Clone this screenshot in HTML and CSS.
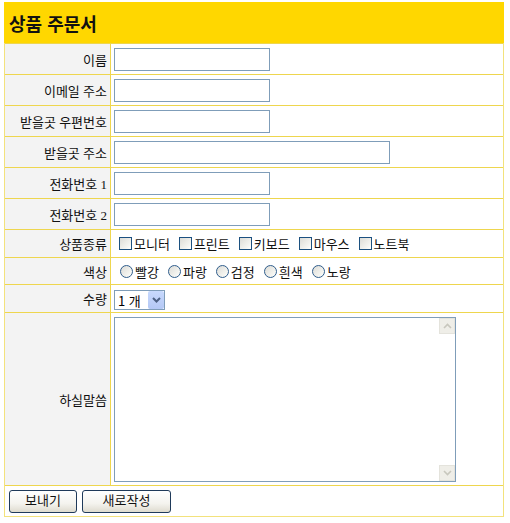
FILE: index.html
```html
<!DOCTYPE html>
<html lang="ko">
<head>
<meta charset="utf-8">
<title>상품 주문서</title>
<link rel="stylesheet" href="styles.css">
</head>
<body>
<form class="order">
  <div class="title">상품 주문서</div>
  <div class="grid">
    <div class="label row-text">이름</div>
    <div class="field row-text"><input class="text" type="text"></div>

    <div class="label row-text">이메일 주소</div>
    <div class="field row-text"><input class="text" type="text"></div>

    <div class="label row-text">받을곳 우편번호</div>
    <div class="field row-text"><input class="text" type="text"></div>

    <div class="label row-text">받을곳 주소</div>
    <div class="field row-text"><input class="text wide" type="text"></div>

    <div class="label row-text">전화번호 1</div>
    <div class="field row-text"><input class="text" type="text"></div>

    <div class="label row-text">전화번호 2</div>
    <div class="field row-text"><input class="text" type="text"></div>

    <div class="label row-check">상품종류</div>
    <div class="field row-check choices">
      <label class="choice"><input class="box" type="checkbox">모니터</label>
      <label class="choice"><input class="box" type="checkbox">프린트</label>
      <label class="choice"><input class="box" type="checkbox">키보드</label>
      <label class="choice"><input class="box" type="checkbox">마우스</label>
      <label class="choice"><input class="box" type="checkbox">노트북</label>
    </div>

    <div class="label row-radio">색상</div>
    <div class="field row-radio choices">
      <label class="choice"><input class="dot" type="radio" name="c">빨강</label>
      <label class="choice"><input class="dot" type="radio" name="c">파랑</label>
      <label class="choice"><input class="dot" type="radio" name="c">검정</label>
      <label class="choice"><input class="dot" type="radio" name="c">흰색</label>
      <label class="choice"><input class="dot" type="radio" name="c">노랑</label>
    </div>

    <div class="label row-select">수량</div>
    <div class="field row-select">
      <span class="select-wrap">
        <select class="select"><option>1 개</option><option>2 개</option></select>
        <span class="select-btn"><svg width="9" height="6" viewBox="0 0 9 6"><path d="M1 1 L4.5 4.5 L8 1" fill="none" stroke="#4d6185" stroke-width="2"/></svg></span>
      </span>
    </div>

    <div class="label row-area">하실말씀</div>
    <div class="field row-area">
      <span class="area-wrap">
        <textarea class="area"></textarea>
        <span class="sb-btn sb-up"><svg width="9" height="6" viewBox="0 0 9 6"><path d="M1 5 L4.5 1.5 L8 5" fill="none" stroke="#c8c7bd" stroke-width="1.6"/></svg></span>
        <span class="sb-btn sb-down"><svg width="9" height="6" viewBox="0 0 9 6"><path d="M1 1 L4.5 4.5 L8 1" fill="none" stroke="#c8c7bd" stroke-width="1.6"/></svg></span>
      </span>
    </div>

    <div class="buttons">
      <button class="btn btn-send" type="button">보내기</button>
      <button class="btn btn-reset" type="button">새로작성</button>
    </div>
  </div>
</form>
</body>
</html>
```
FILE: styles.css
```css
html, body {
  margin: 0;
  padding: 0;
  background: #ffffff;
}
body {
  padding: 2px 0 0 4px;
  font-family: "Liberation Serif", "Noto Sans CJK KR", serif;
  font-size: 13px;
  color: #000;
}
.order {
  width: 500px;
  box-sizing: border-box;
  border: 1px solid #f3e27c;
  border-top: 0;
  margin: 0;
}
.title {
  background: #ffd700;
  height: 41px;
  margin: 0 -1px;
  padding-left: 5px;
  display: flex;
  align-items: center;
  font-family: "Noto Sans CJK KR", sans-serif;
  font-weight: bold;
  font-size: 18px;
  color: #111;
}
.grid {
  display: grid;
  grid-template-columns: 106px 1fr;
}
.label, .field {
  border-top: 1px solid #eed64e;
  display: flex;
  align-items: center;
}
.label {
  background: #f3f3f3;
  border-right: 1px solid #eed64e;
  justify-content: flex-end;
  padding-right: 3px;
  white-space: nowrap;
  color: #111;
}
.field {
  padding-left: 3px;
}
.row-text { height: 30px; }
.row-check { height: 27px; }
.row-radio { height: 26px; }
.row-select { height: 27px; }
.row-area { height: 172px; }

.text {
  box-sizing: border-box;
  width: 156px;
  height: 23px;
  border: 1px solid #7f9db9;
  margin: 0;
  padding: 0 3px;
  background: #fff;
}
.text.wide { width: 276px; }

.choices {
  font-family: "Noto Sans CJK KR", sans-serif;
  font-size: 13px;
}
.row-check.choices { padding-left: 8px; gap: 9px; }
.row-radio.choices { padding-left: 9px; gap: 9px; }
.choice {
  display: inline-flex;
  align-items: center;
  gap: 2px;
  color: #111;
}
.box, .dot {
  appearance: none;
  -webkit-appearance: none;
  margin: 0;
  width: 13px;
  height: 13px;
  border: 1px solid #1c5180;
  background: linear-gradient(135deg, #dcdcd7 0%, #f4f4f0 70%, #ffffff 100%);
  box-sizing: border-box;
}
.dot {
  border-radius: 50%;
  border-color: #2f5d8c;
}

.select-wrap {
  position: relative;
  display: inline-block;
  margin-top: 2px;
}
.select {
  appearance: none;
  -webkit-appearance: none;
  width: 51px;
  height: 20px;
  border: 1px solid #7f9db9;
  background: #fff;
  font-family: "Noto Sans CJK KR", sans-serif;
  font-size: 13px;
  padding: 0 0 0 3px;
  margin: 0;
  color: #000;
}
.select-btn {
  position: absolute;
  right: 1px;
  top: 1px;
  width: 16px;
  height: 18px;
  background: linear-gradient(#c8d9fd, #b4c8f5);
  border-radius: 2px;
  display: flex;
  align-items: center;
  justify-content: center;
  pointer-events: none;
}

.area-wrap {
  position: relative;
  display: inline-block;
  margin-top: 1px;
}
.area {
  display: block;
  box-sizing: border-box;
  width: 342px;
  height: 165px;
  border: 1px solid #7f9db9;
  margin: 0;
  resize: none;
  overflow-y: scroll;
  padding: 2px;
}
.area::-webkit-scrollbar { width: 17px; }
.area::-webkit-scrollbar-track {
  background: #fcfcf9;
  border-left: 1px solid #eeede6;
}
.area::-webkit-scrollbar-thumb { background: transparent; }
.sb-btn {
  position: absolute;
  right: 1px;
  width: 16px;
  height: 16px;
  background: #efeee8;
  border: 1px solid #e4e3dc;
  box-sizing: border-box;
  display: flex;
  align-items: center;
  justify-content: center;
  pointer-events: none;
}
.sb-up { top: 1px; }
.sb-down { bottom: 1px; }

.buttons {
  grid-column: 1 / 3;
  border-top: 1px solid #eed64e;
  height: 30px;
  display: flex;
  align-items: center;
  gap: 5px;
  padding-left: 4px;
}
.btn {
  box-sizing: border-box;
  height: 23px;
  border: 1px solid #1f3a5a;
  border-radius: 3px;
  background: linear-gradient(#ffffff 0%, #f4f3ee 60%, #dedbcf 100%);
  font-family: "Noto Sans CJK KR", sans-serif;
  font-size: 13px;
  color: #111;
  padding: 0 0 3px 0;
  margin: 0;
  line-height: 1;
}
.btn-send { width: 68px; }
.btn-reset { width: 89px; }
```
